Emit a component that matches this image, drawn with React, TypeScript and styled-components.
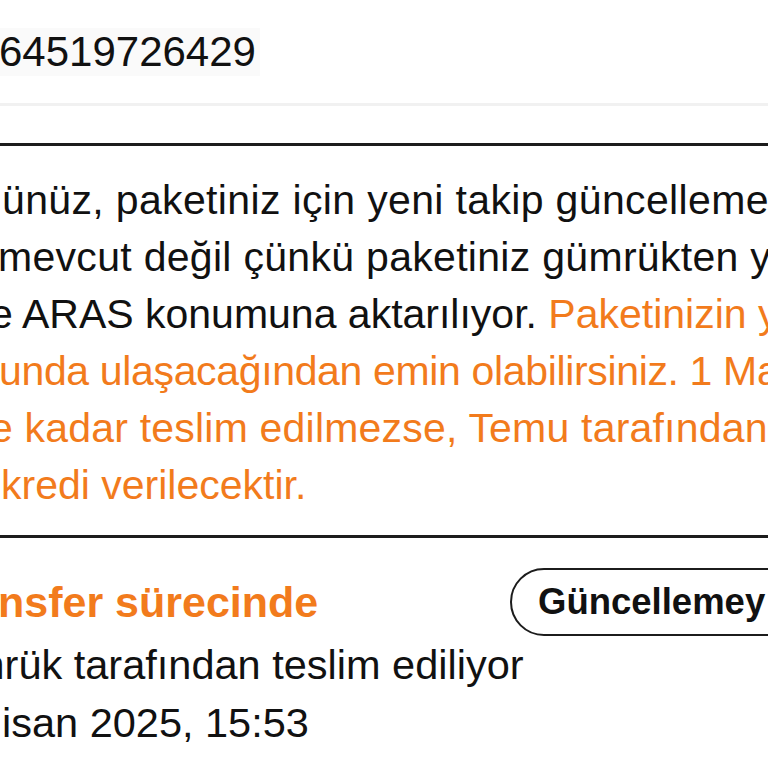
import styled, { createGlobalStyle } from "styled-components";

const colors = {
  black: "#111111",
  orange: "#f27b1c",
  rule: "#1c1c1c",
  softRule: "#f1f1f1",
  white: "#ffffff",
};

const GlobalStyle = createGlobalStyle`
  html, body {
    margin: 0;
    padding: 0;
    background: ${colors.white};
    overflow: hidden;
  }
  body {
    font-family: "Liberation Sans", Arial, sans-serif;
    color: ${colors.black};
  }
`;

type Segment = { text: string; accent?: boolean };

// visible part of the notice, one entry per rendered line
const noticeLines: { indent: number; tracking: number; parts: Segment[] }[] = [
  { indent: 2, tracking: 0.35, parts: [{ text: "ünüz, paketiniz için yeni takip güncelleme" }] },
  { indent: -2, tracking: 0.3, parts: [{ text: "mevcut değil çünkü paketiniz gümrükten y" }] },
  {
    indent: -10,
    tracking: 0,
    parts: [
      { text: "e ARAS konumuna aktarılıyor. " },
      { text: "Paketinizin y", accent: true },
    ],
  },
  { indent: -1, tracking: -0.35, parts: [{ text: "unda ulaşacağından emin olabilirsiniz. 1 Ma", accent: true }] },
  { indent: -10, tracking: 0.2, parts: [{ text: "e kadar teslim edilmezse, Temu tarafından", accent: true }] },
  { indent: 1, tracking: 0, parts: [{ text: "kredi verilecektir.", accent: true }] },
];

const App = () => {
  return (
    <>
      <GlobalStyle />
      <Page>
        <Header>
          <TrackingNumber>64519726429</TrackingNumber>
        </Header>

        <Notice>
          {noticeLines.map((line, i) => (
            <NoticeLine key={i} $indent={line.indent} $tracking={line.tracking}>
              {line.parts.map((p, j) => (
                <Segment key={j} $accent={p.accent}>
                  {p.text}
                </Segment>
              ))}
            </NoticeLine>
          ))}
        </Notice>

        <Status>
          <StatusRow>
            <StatusTitle>nsfer sürecinde</StatusTitle>
            <OutlineButton>Güncellemey</OutlineButton>
          </StatusRow>
          <StatusLine $indent={-30}>mrük tarafından teslim ediliyor</StatusLine>
          <StatusLine $indent={2}>isan 2025, 15:53</StatusLine>
        </Status>
      </Page>
    </>
  );
};
export default App;

const Page = styled.main`
  width: 768px;
  height: 768px;
  overflow: hidden;
  background: ${colors.white};
  display: flex;
  flex-direction: column;
`;

const Header = styled.header`
  padding: 28px 0 27px 0;
  border-bottom: 3px solid ${colors.softRule};
`;

const TrackingNumber = styled.span`
  display: inline-block;
  margin-left: -1px;
  padding-right: 4px;
  font-size: 42px;
  line-height: 48px;
  background: #fafafa;
  color: ${colors.black};
`;

const Notice = styled.section`
  margin-top: 37px;
  border-top: 3px solid ${colors.rule};
  border-bottom: 3px solid ${colors.rule};
  padding: 26px 0 21px 0;
`;

const NoticeLine = styled.div<{ $indent: number; $tracking: number }>`
  white-space: nowrap;
  overflow: hidden;
  font-size: 41px;
  line-height: 57px;
  letter-spacing: ${(p) => `${p.$tracking}px`};
  text-indent: ${(p) => `${p.$indent}px`};
`;

const Segment = styled.span<{ $accent?: boolean }>`
  color: ${(p) => (p.$accent ? colors.orange : colors.black)};
`;

const Status = styled.section`
  padding-top: 30px;
`;

const StatusRow = styled.div`
  display: grid;
  grid-template-columns: 510px 420px;
  align-items: center;
  height: 68px;
`;

const StatusTitle = styled.h2`
  margin: 0 0 0 -2px;
  font-size: 43px;
  line-height: 57px;
  font-weight: 700;
  color: ${colors.orange};
  white-space: nowrap;
`;

const OutlineButton = styled.button`
  box-sizing: border-box;
  height: 68px;
  padding: 0 0 0 26px;
  border: 2px solid ${colors.rule};
  border-radius: 34px;
  background: ${colors.white};
  font-family: "Liberation Sans", Arial, sans-serif;
  font-size: 36.5px;
  font-weight: 700;
  color: ${colors.black};
  text-align: left;
  white-space: nowrap;
`;

const StatusLine = styled.div<{ $indent: number }>`
  white-space: nowrap;
  overflow: hidden;
  font-size: 41.5px;
  line-height: 58px;
  color: ${colors.black};
  text-indent: ${(p) => `${p.$indent}px`};
`;
